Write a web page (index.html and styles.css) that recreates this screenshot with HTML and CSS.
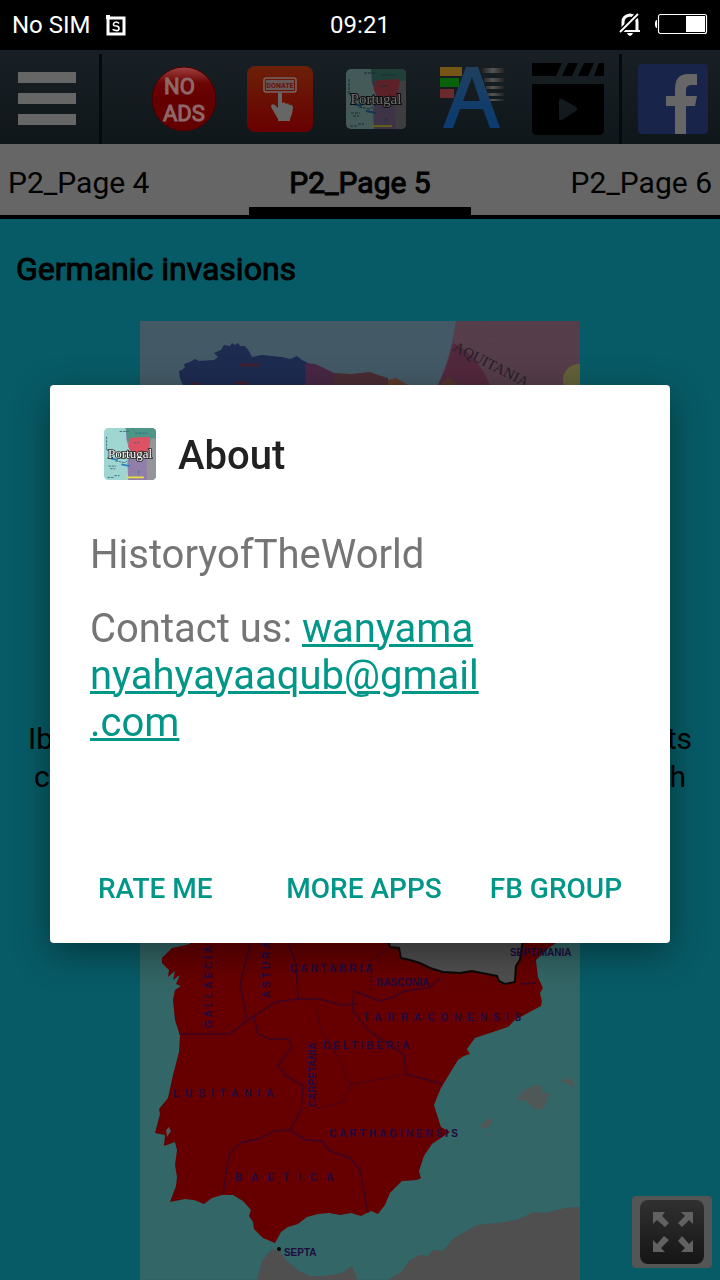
FILE: index.html
```html
<!DOCTYPE html>
<html lang="en">
<head>
<meta charset="utf-8">
<meta name="viewport" content="width=device-width, initial-scale=1">
<title>History of Portugal</title>
<link rel="stylesheet" href="styles.css">
</head>
<body>
<svg class="defs" aria-hidden="true">
  <defs>
    <clipPath id="tile"><rect width="60" height="60" rx="5"/></clipPath>
    <symbol id="portugal" viewBox="0 0 60 60">
      <g clip-path="url(#tile)">
        <rect width="60" height="60" fill="#a0d6d2"/>
        <path d="M25 0H60V60H28L27 40 31 30 26 14Z" fill="#927fa9"/>
        <path d="M25 0H60V16H27Z" fill="#4c9587"/>
        <path d="M29 12L36 11 53 10 53 29 34 31 28 22Z" fill="#dd5262"/>
        <path d="M54 12H60V60H50L49 40Z" fill="#94949b"/>
        <path d="M3 10V25M5 44H14M7 47H13M18 4H30M36 6H50M34 17H42M13 38L24 40 30 36M4 57H11M12 55H18M40 49V54" stroke="#34677c" stroke-width="1" stroke-dasharray="3 1" fill="none"/>
        <path d="M20 42L30 44M8 35L16 37" stroke="#2f7fc0" stroke-width="2"/>
        <path d="M26 57H46" stroke="#e6e23c" stroke-width="2"/>
      </g>
      <text class="tile-text" x="30" y="35">Portugal</text>
    </symbol>
  </defs>
</svg>

<div class="status">
  <div class="status-left">
    <span>No SIM</span>
    <svg width="22" height="24" viewBox="0 0 22 24"><path d="M3 5H19V21H3Z" fill="none" stroke="#fff" stroke-width="3"/><path d="M1 2H5V6H1Z" fill="#fff"/><path d="M14 10.500Q13 9 11 9T8.500 11 11 13 14 15.500 11 17.500 8 16" fill="none" stroke="#fff" stroke-width="1.600"/></svg>
  </div>
  <span>09:21</span>
  <div class="status-right">
    <svg width="24" height="24" viewBox="0 0 24 24"><path d="M5 18V10Q5 4 12 3Q19 4 19 10V18" fill="none" stroke="#fff" stroke-width="3"/><path d="M2 18H22V20H2ZM9 21H15Q14 24 12 24T9 21Z" fill="#fff"/><path d="M1 21L21 1" stroke="#000" stroke-width="5"/><path d="M2 20L20 2" stroke="#fff" stroke-width="2"/></svg>
    <svg width="54" height="22" viewBox="0 0 54 22"><rect x="4.500" y="1.500" width="48" height="19" rx="2" fill="none" stroke="#fff" stroke-width="1.200"/><path d="M32 3H51V19H32ZM3 7V15Q1 15 1 11T3 7Z" fill="#fff"/></svg>
  </div>
</div>

<header class="toolbar">
  <button class="tool side" aria-label="Menu">
    <svg width="58" height="56" viewBox="0 0 58 56"><path d="M0 1H58V12H0ZM0 22H58V33H0ZM0 43H58V54H0Z" fill="#666"/></svg>
  </button>
  <nav class="tools">
    <button class="tool" aria-label="No ads">
      <svg width="66" height="66" viewBox="0 0 66 66">
        <defs><linearGradient id="gloss" x2="0" y2="1"><stop offset="0" stop-color="#a04040"/><stop offset=".25" stop-color="#6c0505"/><stop offset=".5" stop-color="#650000"/></linearGradient></defs>
        <circle cx="33" cy="33" r="32" fill="url(#gloss)" stroke="#400" />
        <text class="ads" x="13" y="28">NO</text><text class="ads" x="12" y="55">ADS</text>
      </svg>
    </button>
    <button class="tool" aria-label="Donate">
      <svg width="66" height="66" viewBox="0 0 66 66">
        <defs><linearGradient id="fire" x2="0" y2="1"><stop offset="0" stop-color="#6b2108"/><stop offset="1" stop-color="#690000"/></linearGradient></defs>
        <rect width="66" height="66" rx="8" fill="url(#fire)"/>
        <rect x="17" y="12" width="32" height="14" rx="2" fill="none" stroke="#776565" stroke-width="1.500"/>
        <rect x="19" y="14" width="28" height="10" fill="#665858"/>
        <text class="donate" x="33" y="22">DONATE</text>
        <path d="M31 27Q34 24 35 28V37Q38 35 39 38Q42 36 42 39Q46 38 46 42L45 48 43 53V55H31V53L24 41Q24 37 28 39L31 42Z" fill="#666"/>
      </svg>
    </button>
    <button class="tool" aria-label="Portugal"><svg class="dim" width="60" height="60"><use href="#portugal"/></svg></button>
    <button class="tool" aria-label="Text style">
      <svg width="64" height="64" viewBox="0 0 64 64">
        <defs><linearGradient id="ink" x2="0" y2="1"><stop offset="0" stop-color="#20405d"/><stop offset="1" stop-color="#0a3b72"/></linearGradient><linearGradient id="bar"><stop offset="0" stop-color="#222"/><stop offset=".5" stop-color="#555"/><stop offset="1" stop-color="#222"/></linearGradient></defs>
        <path d="M0 0H22V9H0Z" fill="#755616"/><path d="M0 11H19V20H0Z" fill="#096209"/><path d="M0 22H14V31H0Z" fill="#6a2a2b"/>
        <path d="M42 1H64V6H42ZM44 11H64V15H44ZM46 19H64V22H46ZM47 26H64V29H47ZM49 32H64V34H49Z" fill="url(#bar)"/>
        <path d="M26 0H38L60 61H50L43 42H20L13 61H3ZM32 10L23 34H40Z" fill="url(#ink)" fill-rule="evenodd"/>
      </svg>
    </button>
    <button class="tool" aria-label="Videos">
      <svg width="72" height="72" viewBox="0 0 72 72"><path d="M0 0H30L24 13H0ZM36 0H46L40 13H30ZM52 0H62L56 13H46ZM67 0H72V13H62Z"/><path fill-rule="evenodd" d="M1 21H71Q72 21 72 23V67Q72 72 67 72H5Q0 72 0 67V23Q0 21 1 21ZM27 38V55Q27 58 30 57L44 48Q46 46 44 44L30 36Q27 35 27 38Z"/></svg>
    </button>
  </nav>
  <button class="tool side" aria-label="Facebook">
    <svg width="70" height="70" viewBox="0 0 70 70"><rect width="70" height="70" rx="4" fill="#18244a"/><path d="M37 70V42H28V32H37V25Q37 10 50 10H59V21H54Q48 21 48 26V32H59L57 42H48V70Z" fill="#666"/></svg>
  </button>
</header>

<nav class="tabs">
  <a href="#p4">P2_Page 4</a>
  <a href="#p5" class="current" aria-current="page">P2_Page 5</a>
  <a href="#p6">P2_Page 6</a>
</nav>

<main class="article">
  <h1>Germanic invasions</h1>
  <svg class="map" viewBox="140 321 440 396" role="img" aria-label="Map of Iberia and Aquitania">
    <rect x="140" y="321" width="440" height="396" fill="#435a66"/>
    <path d="M184 400L184 388 180 378 179 371 182 370 185 367 184 364 190 362 195 359 199 361 214 360 218 357 214 353 221 350 224 345 230 346 232 343 235 345 238 343 240 346 245 346 249 351 252 357 262 355 282 357 290 359 297 356 302 360 310 364 315 400Z" fill="#1d2b50"/>
    <path d="M305 363L315 364 324 368 336 374 342 400H306Z" fill="#482744"/>
    <path d="M334 373L352 374 370 372 378 375 388 378 392 400H330Z" fill="#4a2c34"/>
    <path d="M388 380L396 378 408 385V400H388Z" fill="#5c3928"/>
    <path d="M456 321H580V400H430Q450 365 456 321Z" fill="#553d49"/>
    <path d="M453 343Q481 355 496 400H430Q446 375 453 343Z" fill="#52283d"/>
    <path d="M436 387L448 377 462 387V400H430Z" fill="#51342f"/>
    <circle cx="579" cy="380" r="16" fill="#62613a"/>
    <path d="M239 365H259M192 384H200M236 383H248" stroke="#401f2e" stroke-width="3"/>
    <path d="M482 325L484 340 545 341 557 330" stroke="#5a404c" fill="none"/>
    <text class="label-serif" transform="translate(452 350) rotate(27)">AQUITANIA</text>
  </svg>
  <p class="caption"><span>Ib</span><span>ts</span></p>
  <p class="caption inner"><span>c</span><span>h</span></p>
  <svg class="map second" viewBox="140 900 440 380" role="img" aria-label="Map of the provinces of Iberia">
    <rect x="140" y="900" width="440" height="380" fill="#336666"/>
    <path d="M190 900V944L172 948 162 958 162 963 169 970 168 977 175 971 173 980 180 975 176 984 181 986 175 990 173 1000 175 1020 180 1036 179 1052 173 1075 168 1098 159 1109 160 1114 155 1133 165 1135 164 1146 175 1142 177 1150 175 1165 177 1177 176 1186 170 1202 185 1199 194 1200 204 1204 212 1198 222 1195 233 1195 243 1201 251 1210 249 1216 253 1222 254 1229 263 1238 275 1243 281 1232 288 1227 298 1224 307 1217 318 1214 329 1213 340 1215 351 1213 361 1216 371 1211 378 1214 385 1205 390 1193 402 1181 417 1180 421 1178 419 1171 424 1156 432 1144 450 1132 441 1127 434 1105 441 1088 458 1060 464 1056 470 1054 467 1049 475 1038 508 1027 515 1020 541 1006 542 1001 540 993 543 988 538 977 536 960 550 947 561 940V900Z" fill="#660000"/>
    <path d="M380 900L390 947 399 948 401 958 410 960 420 963 430 968 443 972 460 973 472 971 482 973 497 976 499 981 505 984 515 982 516 966 520 960 523 940V900Z" fill="#4f4f4f" stroke="#0a0808" stroke-width="2"/>
    <path d="M257 1280L262 1261 272 1249 280 1251 287 1261 299 1271 311 1276 325 1276 342 1273 352 1266 358 1280M388 1280L401 1272 410 1260 420 1255 428 1256 433 1250 443 1251 454 1238 477 1225 505 1222 519 1219 534 1212 545 1213 565 1208 580 1207V1280Z" fill="#4f4f4f"/>
    <path d="M516 1099L523 1091 535 1085 541 1086 542 1092 550 1094 544 1108 537 1110 526 1101ZM560 1081L571 1078 575 1087 567 1084ZM480 1125L487 1119 493 1119 490 1126 483 1129ZM485 1135L491 1135 490 1137ZM166 1130L169 1127 171 1131 167 1137Z" fill="#4f5856"/>
    <g class="borders">
      <path d="M180 1034H230L248 1020 276 1002 297 999 320 999 341 1005 358 1004M250 943L240 985 247 1018M288 943L296 963 298 999M254 1017L258 1034 270 1039 288 1039 292 1047 278 1065 285 1075 303 1086 301 1110 290 1130 305 1140 322 1141 330 1151 350 1158 360 1170 368 1213M223 1194L229 1154 240 1143 258 1139 275 1131 290 1130"/>
      <path d="M354 990L352 1010 368 1030 387 1043 404 1055 406 1074 442 1084M354 991L380 1001 394 997 402 992 430 987 441 978M520 984L536 983"/>
      <path stroke-dasharray="2 2" d="M315 1004L321 1031 340 1060 350 1085 343 1102 318 1108M350 1085L406 1074M371 990V960L390 947"/>
    </g>
    <g class="labels">
      <text class="t3" transform="translate(212 1028) rotate(-90)">GALLAECIA</text>
      <text class="t3" transform="translate(270 998) rotate(-90)">ASTURA</text>
      <text class="t3" x="290" y="972">CANTABRIA</text>
      <text x="376" y="986">BASCONIA</text>
      <text class="t6" x="363" y="1021">TARRACONENSIS</text>
      <text class="t3" x="323" y="1049">CELTIBERIA</text>
      <text transform="translate(316 1107) rotate(-90)">CARPETANIA</text>
      <text class="t6" x="173" y="1097">LUSITANIA</text>
      <text class="t3" x="329" y="1137">CARTHAGINENSIS</text>
      <text class="t9" x="235" y="1181">BAETICA</text>
      <text x="284" y="1256">SEPTA</text>
      <text x="510" y="956">SEPTIMANIA</text>
    </g>
    <circle cx="279" cy="1249" r="2"/>
  </svg>
</main>

<button class="expand" aria-label="Full screen">
  <svg width="64" height="64" viewBox="0 0 64 64">
    <defs><linearGradient id="key" x2="0" y2="1"><stop offset="0" stop-color="#303030"/><stop offset="1" stop-color="#151515"/></linearGradient></defs>
    <rect width="64" height="64" rx="8" fill="url(#key)"/>
    <path d="M13 12H25L22 16 29 23 25 27 17 20 13 24ZM53 12V24L49 20 42 27 38 23 45 16 41 12ZM13 52V40L17 44 24 36 29 40 21 48 25 52ZM53 52H41L45 48 38 41 42 36 49 44 53 40Z" fill="#616161"/>
  </svg>
</button>

<div class="overlay">
  <section class="dialog" role="dialog" aria-labelledby="about-title">
    <header class="dialog-head">
      <svg width="52" height="52"><use href="#portugal"/></svg>
      <h2 id="about-title">About</h2>
    </header>
    <div class="message">
      <p>HistoryofTheWorld</p>
      <p>Contact us: <a href="mailto:wanyamanyahyayaaqub@gmail.com">wanyama<wbr>nyahyayaaqub@gmail<wbr>.com</a></p>
    </div>
    <footer class="actions">
      <button>RATE ME</button>
      <button class="push">MORE APPS</button>
      <button>FB GROUP</button>
    </footer>
  </section>
</div>
</body>
</html>
```
FILE: styles.css
```css
* { box-sizing: border-box; }
body {
  margin: 0;
  min-height: 100vh;
  display: flex;
  flex-direction: column;
  background: #075b66;
  color: #000;
  font-family: Roboto, "Liberation Sans", sans-serif;
}
h1, h2, p { margin: 0; }
svg { display: block; flex: none; }
button { border: 0; margin: 0; padding: 0; background: none; font: inherit; color: inherit; }
.defs { position: absolute; width: 0; height: 0; }

.status {
  display: grid;
  grid-template-columns: 1fr auto 1fr;
  align-items: center;
  height: 50px;
  padding: 0 12px;
  background: #000;
  color: #fff;
  font-size: 24px;
}
.status-left, .status-right { display: flex; align-items: center; gap: 14px; }
.status-right { justify-content: flex-end; gap: 12px; padding-bottom: 2px; }

.toolbar {
  display: flex;
  height: 94px;
  padding-top: 4px;
  background: linear-gradient(#182025, #10171b);
}
.tool { display: grid; place-items: center; width: 96px; }
.side { width: 102px; padding-right: 6px; border-right: 3px solid #070a0c; }
.tools { flex: 1; display: flex; justify-content: flex-end; padding-right: 3px; }
.tools + .side { width: 101px; padding: 0 0 0 4px; border-right: 0; border-left: 3px solid #070a0c; }
.dim { filter: brightness(0.42); }
.ads { font: 22px Roboto, sans-serif; fill: #8f6868; stroke: #8f6868; }
.donate { font: bold 7px Roboto, sans-serif; fill: #661008; text-anchor: middle; }
.tile-text { font: 15px "Liberation Serif", serif; text-anchor: middle; fill: #fff; stroke: #222; stroke-width: 2px; paint-order: stroke; }

.tabs {
  display: flex;
  justify-content: space-between;
  height: 75px;
  background: #666;
  border-bottom: 4px solid #000;
  font-size: 30px;
}
.tabs a { padding: 0 8px; line-height: 78px; height: 71px; color: #000; text-decoration: none; }
.tabs .current { padding: 0 40px; border-bottom: 8px solid #000; -webkit-text-stroke: 1px #000; }

.article { flex: 1; display: flex; flex-direction: column; align-items: center; padding-top: 30px; }
.article h1 { align-self: stretch; padding: 0 16px; margin-bottom: 32px; font-size: 32px; line-height: 40px; font-weight: 400; -webkit-text-stroke: 1px #000; }
.map { width: 61.1%; }
.caption { display: flex; justify-content: space-between; align-self: stretch; padding: 0 28px; font-size: 30px; line-height: 38px; }
.map + .caption { margin-top: 3px; }
.caption.inner { padding: 0 34px; }
.second { margin-top: 104px; }
.label-serif { font: 15px "Liberation Serif", serif; fill: #241e29; }
.borders { fill: none; stroke: #3b0524; stroke-width: 1.5px; }
.labels { font: bold 10px "Liberation Sans", sans-serif; fill: #1e0c40; }
.t3 { letter-spacing: 3px; }
.t6 { letter-spacing: 6px; }
.t9 { letter-spacing: 9px; }

.expand { position: fixed; right: 8px; bottom: 12px; display: grid; place-items: center; width: 80px; height: 72px; border-radius: 4px; background: #555; }

.overlay { position: fixed; inset: 50px 0 0; display: grid; align-items: center; padding: 0 50px 2px; }
.dialog { padding: 42px 40px 30px; background: #fff; border-radius: 4px; box-shadow: 0 10px 36px rgba(0, 0, 0, 0.4); }
.dialog-head { display: flex; align-items: center; gap: 22px; height: 54px; padding-left: 14px; }
.dialog-head h2 { padding-top: 4px; font-size: 40px; line-height: 50px; font-weight: 500; color: #212121; }
.message { display: grid; gap: 27px; max-width: 400px; margin-top: 50px; font-size: 40px; line-height: 47px; color: #757575; }
.message a { color: #009688; text-decoration-thickness: 3px; }
.actions { display: flex; gap: 48px; margin-top: 119px; padding: 0 8px; font-size: 28px; line-height: 48px; font-weight: 500; color: #009688; }
.push { margin-left: auto; }
```
